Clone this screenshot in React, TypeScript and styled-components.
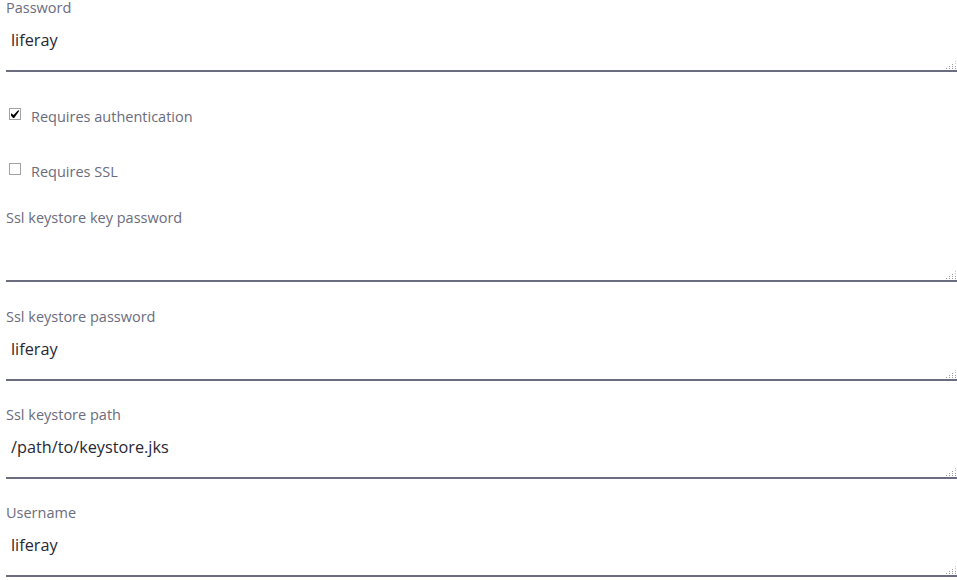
import React from "react";
import styled, { createGlobalStyle } from "styled-components";

const Global = createGlobalStyle`
  html, body { margin: 0; padding: 0; background: #fff; }
  body { font-family: "Open Sans", Lato, sans-serif; overflow: hidden; }
`;

const Form = styled.div`
  display: flex;
  flex-direction: column;
  padding-left: 6px;
  margin-top: -2px;
`;

const Field = styled.div`
  display: flex;
  flex-direction: column;
  margin-bottom: 24.33px;
`;

const Label = styled.label`
  display: block;
  height: 20px;
  line-height: 20px;
  font-size: 14.5px;
  color: #6b6c7e;
  margin-bottom: 1px;
`;

const AreaWrap = styled.div`
  position: relative;
`;

const Area = styled.textarea`
  display: block;
  box-sizing: border-box;
  width: 100%;
  height: 53px;
  padding: 9px 5px 18px;
  border: none;
  border-bottom: 2px solid #6b6c7e;
  font-family: inherit;
  font-size: 16.25px;
  line-height: 24px;
  color: #272833;
  resize: none;
  outline: none;
  background: transparent;
  overflow: hidden;
`;

const GripSvg = styled.svg`
  position: absolute;
  right: 1px;
  bottom: 3px;
  pointer-events: none;
`;

const Grip = () => (
  <GripSvg width="10" height="10" viewBox="0 0 10 10">
    {[
      [0, 9],
      [3, 7],
      [3, 9],
      [6, 5],
      [6, 7],
      [6, 9],
      [9, 2],
      [9, 4],
      [9, 7],
      [9, 9],
    ].map(([x, y], i) => (
      <rect key={i} x={x} y={y} width="1" height="1" fill={y < 5 ? "#c4c4c4" : "#9a9a9a"} />
    ))}
  </GripSvg>
);

const CheckRow = styled.label<{ $last?: boolean }>`
  display: flex;
  align-items: center;
  height: 40px;
  margin-bottom: ${(p) => (p.$last ? "17px" : "15px")};
  font-size: 14.5px;
  color: #6b6c7e;
`;

const Box = styled.span`
  box-sizing: border-box;
  width: 12px;
  height: 12px;
  margin: 0 10px 0 3px;
  border: 1px solid #a3a3a3;
  background: #fff;
  display: inline-flex;
  align-items: center;
  justify-content: center;
  position: relative;
  top: -2px;
`;

const Check = () => (
  <svg width="8" height="8" viewBox="0 0 8 8">
    <path d="M0 3.2 L2.6 5 L7.4 0 L8 1.2 L3.2 8 L2 8 L0 5.6 Z" fill="#000" />
  </svg>
);

const fields1 = [{ label: "Password", value: "liferay" }];
const fields2 = [
  { label: "Ssl keystore key password", value: "" },
  { label: "Ssl keystore password", value: "liferay" },
  { label: "Ssl keystore path", value: "/path/to/keystore.jks" },
  { label: "Username", value: "liferay" },
];

const TextField = ({ label, value }: { label: string; value: string }) => (
  <Field>
    <Label>{label}</Label>
    <AreaWrap>
      <Area defaultValue={value} />
      <Grip />
    </AreaWrap>
  </Field>
);

export default function App() {
  return (
    <>
      <Global />
      <Form>
        {fields1.map((f) => (
          <TextField key={f.label} {...f} />
        ))}
        <CheckRow>
          <Box>
            <Check />
          </Box>
          Requires authentication
        </CheckRow>
        <CheckRow $last>
          <Box />
          Requires SSL
        </CheckRow>
        {fields2.map((f) => (
          <TextField key={f.label} {...f} />
        ))}
      </Form>
    </>
  );
}
